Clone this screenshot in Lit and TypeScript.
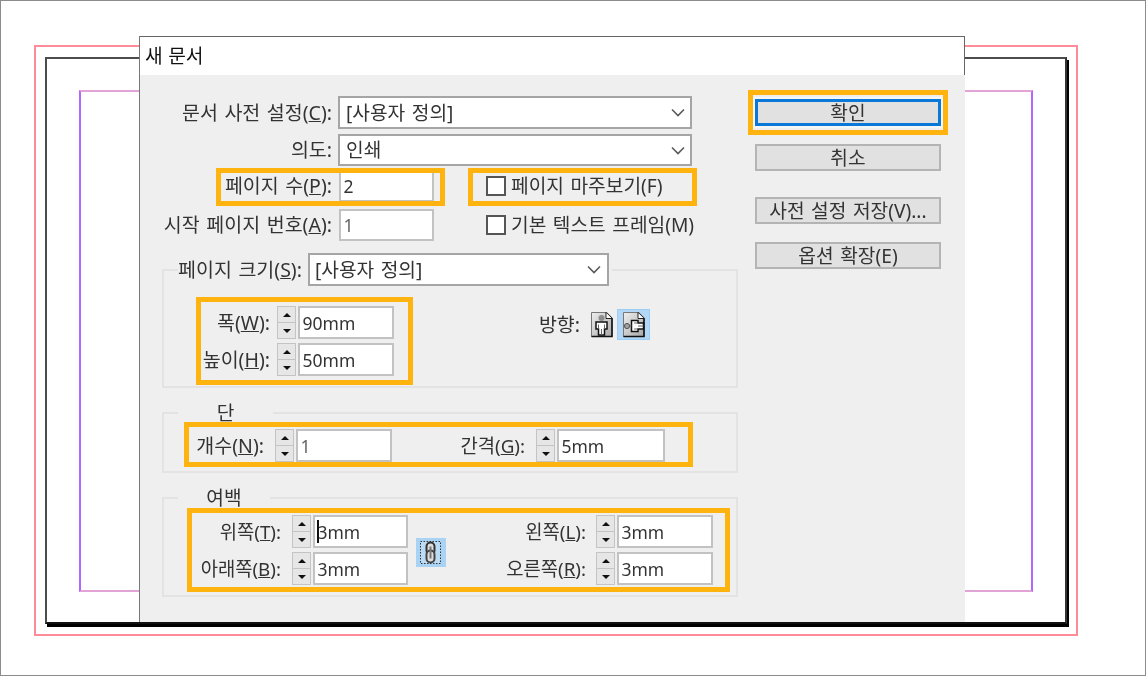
import { LitElement, html, css } from "lit";
import { customElement } from "lit/decorators.js";

const lab = (t: string, k: string) => html`${t}(<u>${k}</u>):`;

const chevron = html`<svg class="chev" width="14" height="9" viewBox="0 0 14 9"><path d="M1 1.5 7 7.5 13 1.5" fill="none" stroke="#5a5a5a" stroke-width="1.6"/></svg>`;

const spinner = html`<div class="spin"><div class="cell"><i class="up"></i></div><div class="cell"><i class="dn"></i></div></div>`;

const portrait = html`<svg width="24" height="27" viewBox="0 0 24 27">
  <defs><linearGradient id="pg" x1="0" y1="0" x2="1" y2="1"><stop offset="0" stop-color="#eee"/><stop offset="1" stop-color="#a8a8a8"/></linearGradient></defs>
  <path d="M1.5 1.5H16L22 7.5V25.5H1.5Z" fill="url(#pg)" stroke="#777"/>
  <path d="M16 1.5 22 7.5V25.5H1.5" fill="none" stroke="#111" stroke-width="1.6"/>
  <path d="M16 1.5V7.5H22" fill="#fff" stroke="#222"/>
  <circle cx="11.5" cy="7" r="3" fill="#8c8c8c"/>
  <path d="M6 11H17V18H14.5V24H8.5V18H6Z" fill="#fff" stroke="#111" stroke-width="1.5"/>
  <path d="M8.5 13.5V18M14.5 13.5V18M11.5 18V24" stroke="#666" fill="none"/>
</svg>`;

const landscape = html`<svg width="24" height="27" viewBox="0 0 24 27">
  <defs><linearGradient id="lg" x1="0" y1="0" x2="1" y2="1"><stop offset="0" stop-color="#eee"/><stop offset="1" stop-color="#a8a8a8"/></linearGradient></defs>
  <path d="M1.5 1.5H16L22 7.5V25.5H1.5Z" fill="url(#lg)" stroke="#777"/>
  <path d="M16 1.5 22 7.5V25.5H1.5" fill="none" stroke="#111" stroke-width="1.6"/>
  <path d="M16 1.5V7.5H22" fill="#fff" stroke="#222"/>
  <circle cx="5" cy="15" r="2.6" fill="#a0a0a0" stroke="#555"/>
  <path d="M9.5 9.5H16V12H21.5V18H16V20.5H9.5Z" fill="#fff" stroke="#111" stroke-width="1.5"/>
  <path d="M7.5 15H9.5M12 12H16M12 18H16M16 15H21.5" stroke="#666" fill="none"/>
</svg>`;

const link = html`<svg width="30" height="29" viewBox="0 0 30 29">
  <rect width="30" height="29" fill="#a9d3f5"/>
  <rect x="4.5" y="3.5" width="20" height="22" fill="#bcdcf5" stroke="#333" stroke-dasharray="1.5 1.5"/>
  <rect x="10.5" y="4.5" width="8" height="12" rx="4" fill="#ddd" stroke="#333" stroke-width="2"/>
  <rect x="10.5" y="12.5" width="8" height="12" rx="4" fill="#ddd" stroke="#444" stroke-width="2"/>
  <path d="M14.5 8.5V20.5" stroke="#777" stroke-width="2"/>
</svg>`;

@customElement("app-root")
export class AppRoot extends LitElement {
  static styles = css`
    :host { display: block; width: 1146px; height: 676px; font-family: "Noto Sans", "Noto Sans CJK KR", sans-serif; }
    * { box-sizing: border-box; }
    .page { position: relative; width: 1146px; height: 676px; background: #fff; border: 1px solid #8c8c8c; padding: 44px 67px 39px 33px; display: flex; overflow: hidden; filter: blur(0.3px); }
    .pink { flex: 1; display: flex; border: 2px solid #ff8a98; padding: 10px 9px 10px 9px; }
    .black { flex: 1; display: flex; border: 2px solid #4c4c4c; border-bottom-color: #111; border-right-color: #333; box-shadow: 2px 3px 0 #000; padding: 31px 32px 30px 32px; }
    .purple { flex: 1; border: 2px solid #e2a3d6; border-left-color: #b266ff; border-right-color: #b266ff; }

    .dialog { position: absolute; left: 138px; top: 35px; width: 826px; height: 586px; border-left: 1px solid #777; color: #333; font-size: 19.2px; word-spacing: 1.5px; }
    .title { height: 39px; background: #fff; border-top: 1px solid #666; border-right: 1px solid #666; padding: 6px 0 0 5px; color: #111; line-height: 26px; word-spacing: 0.5px; }
    .body { height: 547px; background: #efefef; display: flex; align-items: flex-start; padding-top: 21px; }
    .left { width: 600px; flex: none; display: flex; flex-direction: column; }
    .right { width: 186px; flex: none; margin-left: 15px; padding-top: 3px; display: flex; flex-direction: column; }

    .row { display: flex; align-items: center; }
    .end { justify-content: flex-end; }
    .lbl { white-space: nowrap; text-align: right; flex: none; line-height: 24px; font-size: 19.5px; }
    .lbl.tight { font-size: 18.8px; }
    .top-lbl { width: 192px; margin-right: 6px; }
    .h33 { height: 33px; margin-bottom: 5px; }
    .h32a { height: 32px; margin-bottom: 4px; }
    .h32b { height: 32px; margin-bottom: 7px; }
    .h32c { height: 32px; margin-bottom: 12px; }

    .select { background: #fff; border: 2px solid #a5a5a5; height: 100%; display: flex; align-items: center; justify-content: space-between; padding: 0 4px 0 6px; white-space: nowrap; line-height: 24px; }
    .select.wide { width: 354px; }
    .select.mid { width: 301px; height: 33px; padding-left: 5px; padding-right: 5px; }
    .chev { margin-right: 1px; flex: none; }

    .input { position: relative; background: #fff; border: 2px solid #c2c2c2; height: 33px; padding-left: 2.5px; display: flex; align-items: center; font-size: 17.5px; line-height: 24px; flex: none; }
    .w95 { width: 95px; }
    .w96 { width: 96px; }
    .w108 { width: 108px; }
    .dim { color: #666; }
    .top-input { margin-left: 1px; height: 32px; }
    .caret { position: absolute; left: 2px; top: 3px; width: 1.5px; height: 23px; background: #111; }

    .check { display: flex; align-items: center; margin-left: 52px; white-space: nowrap; line-height: 24px; }
    .box { width: 20px; height: 20px; border: 2px solid #555; background: #fff; margin-right: 5px; flex: none; }

    .spin { width: 19px; height: 33px; flex: none; margin-right: 2px; border: 1.5px solid #c4c4c4; background: #e6e6e6; display: flex; flex-direction: column; }
    .cell { flex: 1; display: flex; align-items: center; justify-content: center; }
    .cell + .cell { border-top: 1.5px solid #c4c4c4; }
    .up, .dn { display: block; width: 0; height: 0; border-left: 4.5px solid transparent; border-right: 4.5px solid transparent; }
    .up { border-bottom: 4.5px solid #111; }
    .dn { border-top: 4.5px solid #111; }

    fieldset { margin: 0 0 13px 22px; width: 576px; padding: 0; min-width: 0; border: 2px solid #e3e3e3; }
    legend { margin-left: 14px; padding: 0; }
    .lg-size { height: 33px; }
    .lg-row { display: flex; align-items: center; height: 33px; padding-right: 3px; }
    .lg-row .lbl { margin-right: 6px; }
    .lg-txt { height: 24px; line-height: 24px; text-align: center; }
    .lg-dan { width: 95px; }
    .lg-mar { width: 92px; }

    .size-body { display: flex; align-items: flex-start; padding: 20px 0 10px; }
    .stack { display: flex; flex-direction: column; gap: 4px; flex: none; }
    .lab-106 { width: 106px; margin-right: 7px; }
    .orient { display: flex; align-items: center; margin: 3px 0 0 144px; }
    .orient .lbl { margin-right: 10px; width: 42px; }
    .ico { display: block; flex: none; }
    .ico-plain { margin-right: 3px; width: 24px; height: 27px; }
    .ico-on { width: 33px; height: 31px; background: #b3d8f7; border: 1.5px solid #9ccdf5; display: flex; align-items: center; justify-content: center; }

    .dan-body { display: flex; padding: 4px 0 9px; }
    .lab-100 { width: 100px; margin-right: 11px; }
    .lab-133 { width: 133px; margin-right: 11px; }

    .mar-body { display: flex; align-items: flex-start; padding: 5px 0 10px; }
    .lab-117 { width: 117px; margin-right: 11px; }
    .lab-140 { width: 140px; margin-right: 10px; }
    .link { margin: 23px 0 0 8px; flex: none; display: block; }

    .btn { height: 27px; width: 186px; flex: none; background: #e1e1e1; border: 2px solid #b4b4b4; display: flex; align-items: center; justify-content: center; white-space: nowrap; line-height: 22px; font-size: 19.2px; }
    .btn.ok { border: 3px solid #0a78d6; outline: 2px solid #f6f6f6; margin-bottom: 18px; }
    .mb26 { margin-bottom: 26px; }
    .mb18 { margin-bottom: 18px; }

    .hl { position: absolute; border: 5px solid #ffb30f; pointer-events: none; }
    .hl-pages { left: 76px; top: 132px; width: 229px; height: 38px; }
    .hl-facing { left: 328px; top: 132px; width: 229px; height: 38px; }
    .hl-ok { left: 608px; top: 54px; width: 200px; height: 45px; }
    .hl-size { left: 56px; top: 261px; width: 217px; height: 88px; }
    .hl-dan { left: 44px; top: 386px; width: 509px; height: 45px; }
    .hl-mar { left: 47px; top: 472px; width: 543px; height: 84px; }
  `;

  render() {
    return html`
      <div class="page">
        <div class="pink"><div class="black"><div class="purple"></div></div></div>
        <div class="dialog">
          <div class="title">새 문서</div>
          <div class="body">
            <div class="left">
              <div class="row h33">
                <div class="lbl top-lbl">${lab("문서 사전 설정", "C")}</div>
                <div class="select wide"><span>[사용자 정의]</span>${chevron}</div>
              </div>
              <div class="row h32a">
                <div class="lbl top-lbl">의도:</div>
                <div class="select wide"><span>인쇄</span>${chevron}</div>
              </div>
              <div class="row h32b">
                <div class="lbl top-lbl">${lab("페이지 수", "P")}</div>
                <div class="input w95 top-input">2</div>
                <div class="check"><div class="box"></div>페이지 마주보기(F)</div>
              </div>
              <div class="row h32c">
                <div class="lbl top-lbl">${lab("시작 페이지 번호", "A")}</div>
                <div class="input w95 top-input dim">1</div>
                <div class="check"><div class="box"></div>기본 텍스트 프레임(M)</div>
              </div>

              <fieldset>
                <legend class="lg-size"><div class="lg-row"><span class="lbl">${lab("페이지 크기", "S")}</span>
                  <div class="select mid"><span>[사용자 정의]</span>${chevron}</div></div>
                </legend>
                <div class="size-body">
                  <div class="stack">
                    <div class="row"><div class="lbl lab-106">${lab("폭", "W")}</div>${spinner}<div class="input w96">90mm</div></div>
                    <div class="row"><div class="lbl lab-106">${lab("높이", "H")}</div>${spinner}<div class="input w96">50mm</div></div>
                  </div>
                  <div class="orient">
                    <div class="lbl">방향:</div>
                    <div class="ico ico-plain">${portrait}</div>
                    <div class="ico-on">${landscape}</div>
                  </div>
                </div>
              </fieldset>

              <fieldset>
                <legend><div class="lg-txt lg-dan">단</div></legend>
                <div class="dan-body">
                  <div class="lbl lab-100 row end">${lab("개수", "N")}</div>
                  <div class="row">${spinner}<div class="input w96 dim">1</div></div>
                  <div class="lbl tight lab-133 row end">${lab("간격", "G")}</div>
                  <div class="row">${spinner}<div class="input w108">5mm</div></div>
                </div>
              </fieldset>

              <fieldset>
                <legend><div class="lg-txt lg-mar">여백</div></legend>
                <div class="mar-body">
                  <div class="stack">
                    <div class="row"><div class="lbl tight lab-117">${lab("위쪽", "T")}</div>${spinner}<div class="input w95"><span class="caret"></span>3mm</div></div>
                    <div class="row"><div class="lbl tight lab-117">${lab("아래쪽", "B")}</div>${spinner}<div class="input w95">3mm</div></div>
                  </div>
                  <div class="link">${link}</div>
                  <div class="stack">
                    <div class="row"><div class="lbl tight lab-140">${lab("왼쪽", "L")}</div>${spinner}<div class="input w96">3mm</div></div>
                    <div class="row"><div class="lbl tight lab-140">${lab("오른쪽", "R")}</div>${spinner}<div class="input w96">3mm</div></div>
                  </div>
                </div>
              </fieldset>
            </div>
            <div class="right">
              <div class="btn ok">확인</div>
              <div class="btn mb26">취소</div>
              <div class="btn mb18">사전 설정 저장(V)...</div>
              <div class="btn">옵션 확장(E)</div>
            </div>
          </div>
          <div class="hl hl-pages"></div>
          <div class="hl hl-facing"></div>
          <div class="hl hl-ok"></div>
          <div class="hl hl-size"></div>
          <div class="hl hl-dan"></div>
          <div class="hl hl-mar"></div>
        </div>
      </div>
    `;
  }
}
